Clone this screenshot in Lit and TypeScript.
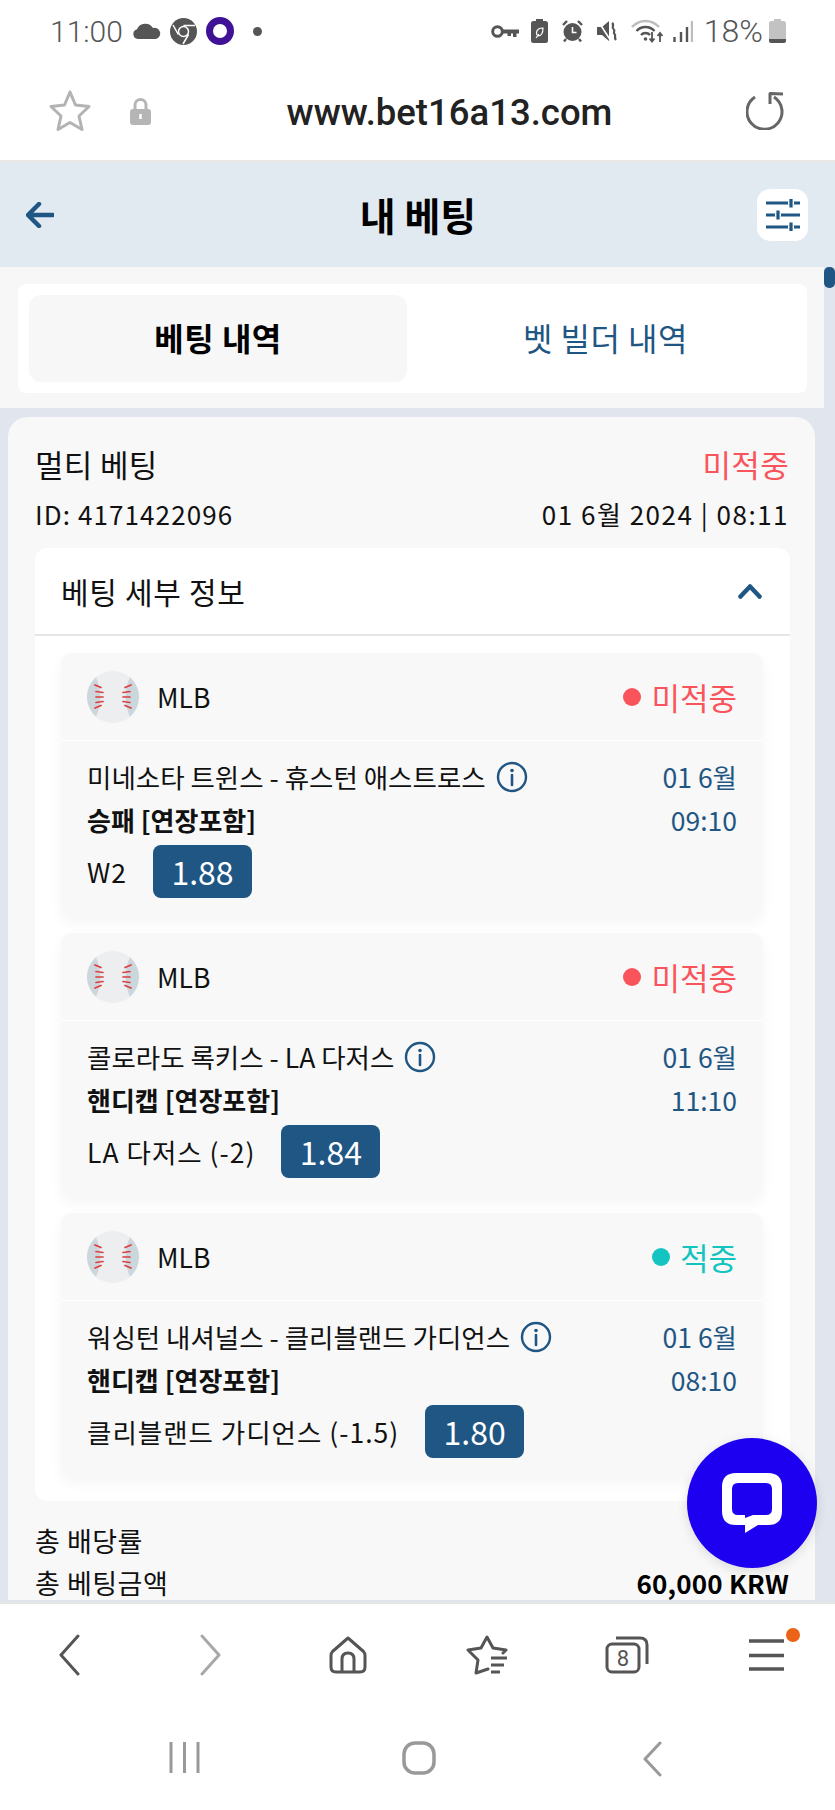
import { LitElement, html, css, svg } from "lit";

const ball = html`<svg class="ball" viewBox="0 0 52 52">
  <circle cx="26" cy="26" r="26" fill="#eceeef" />
  <path d="M9 6.300Q18 26 9 45.700A26 26 0 0 1 9 6.300ZM43 6.300Q34 26 43 45.700A26 26 0 0 0 43 6.300Z" fill="#ccd6dd" />
  <path d="M8 14l6 2.500M9 20.500l7 1M9 26h7M9 31.500l7-1M8 37l6-2.500M44 14l-6 2.500M43 20.500l-7 1M43 26h-7M43 31.500l-7-1M44 37l-6-2.500" stroke="#dd3e3e" stroke-width="1.700" stroke-linecap="round" fill="none" />
</svg>`;

const info = html`<svg class="info" viewBox="0 0 32 32">
  <circle cx="16" cy="16" r="14" fill="none" stroke="#1f5683" stroke-width="2.400" />
  <circle cx="16" cy="9.500" r="1.800" fill="#1f5683" />
  <path d="M16 14v10" stroke="#1f5683" stroke-width="2.600" stroke-linecap="round" />
</svg>`;

interface Bet {
  teams: string;
  market: string;
  pick: string;
  odds: string;
  time: string;
  won: boolean;
}

const bets: Bet[] = [
  { teams: "미네소타 트윈스 - 휴스턴 애스트로스", market: "승패 [연장포함]", pick: "W2", odds: "1.88", time: "09:10", won: false },
  { teams: "콜로라도 록키스 - LA 다저스", market: "핸디캡 [연장포함]", pick: "LA 다저스 (-2)", odds: "1.84", time: "11:10", won: false },
  { teams: "워싱턴 내셔널스 - 클리블랜드 가디언스", market: "핸디캡 [연장포함]", pick: "클리블랜드 가디언스 (-1.5)", odds: "1.80", time: "08:10", won: true },
];

class BetCard extends LitElement {
  static properties = { bet: { attribute: false } };
  declare bet: Bet;

  static styles = css`
    :host {
      display: block;
      background: #f8f8f8;
      border-radius: 10px;
      box-shadow: 0 5px 14px rgba(0, 0, 0, 0.04);
      color: #111;
    }
    .head {
      height: 87px;
      padding: 0 26px;
      display: flex;
      align-items: center;
      border-bottom: 1px solid #fff;
    }
    .ball {
      display: block;
      width: 52px;
      height: 52px;
      margin-right: 18px;
    }
    .league {
      font-size: 26.500px;
      flex: 1;
    }
    .status {
      font-size: 31px;
      color: #f9545b;
      display: flex;
      align-items: center;
      gap: 10px;
    }
    .status.won {
      color: #14c4c0;
    }
    .dot {
      width: 18px;
      height: 18px;
      border-radius: 50%;
      background: currentColor;
    }
    .body {
      padding: 19px 26px 20px;
      display: flex;
      justify-content: space-between;
    }
    .line {
      height: 34px;
      line-height: 34px;
      font-size: 26.500px;
      display: flex;
      align-items: center;
      white-space: nowrap;
    }
    .info {
      display: block;
      width: 32px;
      height: 32px;
      margin-left: 10px;
    }
    .market {
      font-weight: 700;
      font-size: 26px;
      margin-top: 9px;
    }
    .pick {
      height: 53px;
      margin-top: 8px;
      gap: 26px;
      letter-spacing: 1px;
    }
    .odds {
      width: 99px;
      height: 53px;
      line-height: 53px;
      border-radius: 8px;
      background: #1f5683;
      color: #fff;
      font-size: 32px;
      letter-spacing: 0;
      text-align: center;
    }
    .when {
      color: #1f5683;
      text-align: right;
    }
    .when .line {
      justify-content: flex-end;
    }
    .when .line + .line {
      margin-top: 9px;
    }
  `;

  render() {
    const b = this.bet;
    return html`
      <div class="head">
        ${ball}
        <div class="league">MLB</div>
        <div class="status ${b.won ? "won" : ""}"><span class="dot"></span>${b.won ? "적중" : "미적중"}</div>
      </div>
      <div class="body">
        <div>
          <div class="line">${b.teams}${info}</div>
          <div class="line market">${b.market}</div>
          <div class="line pick">${b.pick}<span class="odds">${b.odds}</span></div>
        </div>
        <div class="when">
          <div class="line">01 6월</div>
          <div class="line">${b.time}</div>
        </div>
      </div>
    `;
  }
}
customElements.define("bet-card", BetCard);

class AppRoot extends LitElement {
  static styles = css`
    :host {
      display: block;
      width: 835px;
      height: 1810px;
      overflow: hidden;
      background: #fff;
      font-family: "Noto Sans CJK KR", "Noto Sans", sans-serif;
    }
    .page {
      height: 1810px;
      display: flex;
      flex-direction: column;
    }
    svg {
      display: block;
      flex: none;
    }
    .status-bar {
      height: 62px;
      flex: none;
      padding: 0 49px 0 50px;
      display: flex;
      align-items: center;
      color: #555;
      font-family: Roboto, sans-serif;
      font-weight: 300;
      font-size: 30px;
    }
    .status-bar .clock {
      width: 83px;
    }
    .status-bar .push {
      margin-left: auto;
    }
    .status-bar .level {
      margin-left: 11px;
      font-size: 32px;
    }
    .url-bar {
      height: 98px;
      flex: none;
      padding: 0 49px 0 49px;
      display: flex;
      align-items: center;
      border-bottom: 3px solid #e8e8e8;
      box-sizing: content-box;
    }
    .url {
      flex: 1;
      text-align: center;
      font-family: Roboto, sans-serif;
      font-weight: 500;
      font-size: 36.500px;
      color: #222;
      padding: 2px 0 0 2px;
    }
    .top {
      height: 104px;
      flex: none;
      background: #e1e9f1;
      padding: 0 27px 0 26px;
      display: flex;
      align-items: center;
      justify-content: space-between;
    }
    .title {
      font-size: 39px;
      font-weight: 700;
      color: #000;
      padding: 0 0 2px 25px;
    }
    .filter {
      width: 51px;
      height: 52px;
      border-radius: 13px;
      background: #fff;
      display: flex;
      align-items: center;
      justify-content: center;
    }
    .main {
      flex: 1;
      min-height: 0;
      overflow: hidden;
      position: relative;
      background: #e1e6ee;
    }
    .thumb {
      position: absolute;
      right: 0;
      top: 0;
      width: 11px;
      height: 21px;
      border-radius: 5px;
      background: #1f5683;
    }
    .tabs-wrap {
      width: 824px;
      box-sizing: border-box;
      background: #f7f7f8;
      padding: 17px 17px 15px 18px;
    }
    .tabs {
      height: 109px;
      box-sizing: border-box;
      border-radius: 8px;
      background: #fff;
      padding: 11px;
      display: flex;
      font-size: 32px;
      letter-spacing: 0.500px;
    }
    .tab {
      height: 87px;
      width: 378px;
      box-sizing: border-box;
      padding-bottom: 3px;
      border-radius: 12px;
      display: flex;
      align-items: center;
      justify-content: center;
    }
    .tab.active {
      background: #f7f7f7;
      font-weight: 700;
      color: #000;
    }
    .tab.other {
      flex: 1;
      color: #1f5683;
      padding-left: 8px;
    }
    .card {
      width: 807px;
      margin: 9px 0 0 8px;
      box-sizing: border-box;
      padding: 27px 26px 0 27px;
      background: #f8f8f8;
      border-radius: 20px 20px 0 0;
      color: #111;
    }
    .row {
      display: flex;
      align-items: center;
      justify-content: space-between;
      white-space: nowrap;
    }
    .big {
      height: 40px;
      font-size: 31px;
      letter-spacing: 0.300px;
      transform: translateY(-1px);
    }
    .lost {
      color: #f9545b;
    }
    .meta {
      height: 36px;
      font-size: 26px;
      letter-spacing: 1.100px;
      margin-top: 11px;
    }
    .meta .date {
      letter-spacing: 1.500px;
    }
    .panel {
      margin: 17px -1px 0 0;
      background: #fff;
      border-radius: 12px;
    }
    .panel-head {
      height: 86px;
      padding: 0 28px 0 26px;
      border-bottom: 2px solid #e6e6e6;
      font-size: 30px;
      letter-spacing: 0.700px;
    }
    .bets {
      padding: 17px 27px 23px 26px;
      display: flex;
      flex-direction: column;
      gap: 15px;
    }
    .total {
      height: 36px;
      font-size: 27px;
      letter-spacing: 0.500px;
      margin-top: 21px;
    }
    .total + .total {
      margin-top: 6px;
    }
    .total b {
      font-size: 26px;
      font-weight: 700;
      color: #000;
      letter-spacing: 0.200px;
    }
    .chat {
      position: absolute;
      left: 687px;
      top: 1171px;
      width: 130px;
      height: 130px;
      border-radius: 50%;
      background: #1e00f0;
      box-shadow: 0 3px 12px rgba(0, 0, 0, 0.12);
      display: flex;
      align-items: center;
      justify-content: center;
    }
    .nav {
      height: 126px;
      flex: none;
      background: #fff;
      border-top: 2px solid #e6e6e6;
      display: grid;
      grid-template-columns: repeat(6, 139.600px);
      justify-content: center;
      justify-items: center;
      align-items: center;
      padding-bottom: 22px;
      box-sizing: border-box;
    }
    .nav .forward {
      margin-left: 6px;
    }
    .menu {
      position: relative;
    }
    .badge {
      position: absolute;
      right: -16px;
      top: -11px;
      width: 14px;
      height: 14px;
      border-radius: 50%;
      background: #ea6317;
    }
    .sys {
      height: 82px;
      flex: none;
      display: flex;
      align-items: flex-start;
      background: #fff;
      padding: 13px 173px 0 169px;
      box-sizing: border-box;
      justify-content: space-between;
    }
    .sys .home {
      margin-right: 4px;
    }
  `;

  statusLeft() {
    return html`
      <span class="clock">11:00</span>
      <svg width="28" height="16" viewBox="0 0 28 16"><path d="M5 16a5 5 0 0 1-1-9.800A9 9 0 0 1 20 5a5.600 5.600 0 0 1 3 11Z" fill="#555" /></svg>
      <svg style="margin-left:9px" width="27" height="27" viewBox="0 0 27 27">
        <circle cx="13.500" cy="13.500" r="13.500" fill="#555" />
        <circle cx="13.500" cy="13.500" r="5" fill="#555" stroke="#fff" stroke-width="1.500" />
        <path d="M13.500 7.500H25M8.300 16.500L3 7M18.500 16.500L13 26" stroke="#fff" stroke-width="1.500" fill="none" />
      </svg>
      <svg style="margin-left:9px" width="28" height="28" viewBox="0 0 28 28">
        <circle cx="14" cy="14" r="10.500" fill="none" stroke="#3f1296" stroke-width="7" />
      </svg>
      <svg style="margin-left:19px" width="9" height="9" viewBox="0 0 9 9"><circle cx="4.500" cy="4.500" r="4.500" fill="#555" /></svg>
    `;
  }

  statusRight() {
    return html`
      <svg class="push" width="28" height="13" viewBox="0 0 28 13">
        <circle cx="6.500" cy="6.500" r="4.800" fill="none" stroke="#555" stroke-width="3" />
        <path d="M10 4.500h18v4h-2.500V12h-3.500V8.500h-2V11h-3.500V8.500H10Z" fill="#555" />
      </svg>
      <svg style="margin-left:12px" width="17" height="24" viewBox="0 0 17 24">
        <path d="M5 0h7v2h2.500A2.500 2.500 0 0 1 17 4.500V21.500A2.500 2.500 0 0 1 14.500 24H2.500A2.500 2.500 0 0 1 0 21.500V4.500A2.500 2.500 0 0 1 2.500 2H5Z" fill="#555" />
        <path d="M12 9c-4 0-6.500 1.500-6.500 5 0 1.500.5 2.500 1.500 3 3 0 5-2 5-8ZM5 19l3-4" stroke="#fff" stroke-width="1.200" fill="none" />
      </svg>
      <svg style="margin-left:14px" width="21" height="22" viewBox="0 0 21 22">
        <circle cx="10.500" cy="12" r="9" fill="#555" />
        <path d="M10.500 7v5.500h4" stroke="#fff" stroke-width="1.600" fill="none" />
        <path d="M1 5l4-4M20 5l-4-4M4 19l-2 2.500M17 19l2 2.500" stroke="#555" stroke-width="2.400" />
      </svg>
      <svg style="margin-left:14px" width="22" height="22" viewBox="0 0 22 22">
        <path d="M0 7h5l7-6v20l-7-6H0Z" fill="#555" />
        <path d="M1 1l13 20" stroke="#fff" stroke-width="1.600" />
        <path d="M15 3c3 2-1 4 1.500 6s-1 3 1 5-1 3 1.500 6" stroke="#555" stroke-width="2.200" fill="none" />
      </svg>
      <svg style="margin-left:12px" width="33" height="24" viewBox="0 0 33 24">
        <path d="M1 8a18 18 0 0 1 27 0" stroke="#bdbdbd" stroke-width="2.500" fill="none" />
        <path d="M5.500 12a12 12 0 0 1 18 0M10 16a6 6 0 0 1 9 0" stroke="#555" stroke-width="2.500" fill="none" />
        <circle cx="14.500" cy="20" r="1.800" fill="#555" />
        <path d="M21 13v9M18.500 19.500l2.500 3 2.500-3M29 23v-9M26.500 17l2.500-3 2.500 3" stroke="#555" stroke-width="1.800" fill="none" />
      </svg>
      <svg style="margin-left:9px" width="20" height="21" viewBox="0 0 20 21">
        <path d="M1.500 16v5M8 11v10M14 6v15" stroke="#555" stroke-width="2.400" />
        <path d="M19 0v21" stroke="#bdbdbd" stroke-width="2.400" />
      </svg>
      <span class="level">18%</span>
      <svg style="margin-left:6px" width="17" height="24" viewBox="0 0 17 24">
        <path d="M5 0h7v2h2.500A2.500 2.500 0 0 1 17 4.500V21.500A2.500 2.500 0 0 1 14.500 24H2.500A2.500 2.500 0 0 1 0 21.500V4.500A2.500 2.500 0 0 1 2.500 2H5Z" fill="#c2c2c2" />
        <path d="M0 20h17v1.500A2.500 2.500 0 0 1 14.500 24H2.500A2.500 2.500 0 0 1 0 21.500Z" fill="#555" />
      </svg>
    `;
  }

  filterIcon() {
    const bar = (y: number, k: number) => svg`
      <path d="M0 ${y}H34" stroke="#1f5683" stroke-width="3.200" />
      <path d="M${k - 3} ${y}h6" stroke="#fff" stroke-width="3.400" />
      <path d="M${k} ${y - 4.500}V${y + 4.500}" stroke="#1f5683" stroke-width="3.200" />`;
    return html`<svg width="34" height="32" viewBox="0 0 34 32">${bar(4, 25)}${bar(16, 12)}${bar(28, 25)}</svg>`;
  }

  navBar() {
    return html`
      <nav class="nav">
        <svg width="22" height="42" viewBox="0 0 22 42"><path d="M20 2 3 21l17 19" stroke="#555" stroke-width="3" fill="none" stroke-linecap="round" stroke-linejoin="round" /></svg>
        <svg class="forward" width="22" height="42" viewBox="0 0 22 42"><path d="M2 2l17 19L2 40" stroke="#a8a8a8" stroke-width="3" fill="none" stroke-linecap="round" stroke-linejoin="round" /></svg>
        <svg width="38" height="38" viewBox="0 0 38 38">
          <path d="M19 2 3.500 15.500Q2 17 2 19.500V31q0 5 5 5h24q5 0 5-5V19.500q0-2.500-1.500-4Z" stroke="#555" stroke-width="3" fill="none" stroke-linejoin="round" />
          <path d="M13 36V23q0-6 6-6t6 6v13" stroke="#555" stroke-width="3" fill="none" />
        </svg>
        <svg width="42" height="40" viewBox="0 0 42 40">
          <path d="M22 34 10 38l2-13-10-10 13-2L21 2l6 11 13 2-3 3" stroke="#555" stroke-width="3" fill="none" stroke-linejoin="round" stroke-linecap="round" />
          <path d="M25 23h16M25 30h13M25 37h9" stroke="#555" stroke-width="3" />
        </svg>
        <svg width="44" height="38" viewBox="0 0 44 38">
          <rect x="2" y="8" width="32" height="28" rx="5" fill="none" stroke="#555" stroke-width="3" />
          <path d="M11 2h24q7 0 7 7v19" stroke="#555" stroke-width="3" fill="none" />
          <text x="18" y="30" text-anchor="middle" font-family="Roboto, sans-serif" font-size="22" fill="#555">8</text>
        </svg>
        <div class="menu">
          <svg width="35" height="32" viewBox="0 0 35 32"><path d="M0 2h35M0 16.500h35M0 30h35" stroke="#555" stroke-width="3.500" /></svg>
          <span class="badge"></span>
        </div>
      </nav>
    `;
  }

  render() {
    return html`
      <div class="page">
        <div class="status-bar">${this.statusLeft()}${this.statusRight()}</div>
        <div class="url-bar">
          <svg width="42" height="42" viewBox="0 0 42 42"><path d="M21 2l5.500 13L40 16.500 30 26l3 13.500-12-7-12 7L12 26 2 16.500 15.500 15Z" fill="none" stroke="#b3b3b3" stroke-width="3" stroke-linejoin="round" /></svg>
          <svg style="margin-left:39px" width="21" height="27" viewBox="0 0 21 27">
            <path d="M5 12V7a5.500 5.500 0 0 1 11 0v5" fill="none" stroke="#b5b5b5" stroke-width="3" />
            <path d="M3 11h15a3 3 0 0 1 3 3v10a3 3 0 0 1-3 3H3a3 3 0 0 1-3-3V14a3 3 0 0 1 3-3Z" fill="#b5b5b5" />
            <path d="M10.500 16v5" stroke="#fff" stroke-width="2.500" />
          </svg>
          <div class="url">www.bet16a13.com</div>
          <svg width="40" height="38" viewBox="0 0 40 38">
            <path d="M9 5A17.500 17.500 0 1 0 28 5M24 12V1.500L37 2" fill="none" stroke="#666" stroke-width="3" stroke-linejoin="round" />
          </svg>
        </div>
        <header class="top">
          <svg width="28" height="26" viewBox="0 0 28 26"><path d="M13 2 2 13l11 11M3 13h24" fill="none" stroke="#1f5683" stroke-width="4.500" stroke-linecap="round" stroke-linejoin="round" /></svg>
          <div class="title">내 베팅</div>
          <div class="filter">${this.filterIcon()}</div>
        </header>
        <main class="main">
          <div class="thumb"></div>
          <div class="tabs-wrap">
            <div class="tabs">
              <div class="tab active">베팅 내역</div>
              <div class="tab other">벳 빌더 내역</div>
            </div>
          </div>
          <section class="card">
            <div class="row big"><span>멀티 베팅</span><span class="lost">미적중</span></div>
            <div class="row meta"><span>ID: 4171422096</span><span class="date">01 6월 2024 | 08:11</span></div>
            <div class="panel">
              <div class="row panel-head">
                <span>베팅 세부 정보</span>
                <svg width="24" height="16" viewBox="0 0 24 16"><path d="M2.500 13.500 12 3.500l9.500 10" fill="none" stroke="#1f5683" stroke-width="4.500" stroke-linecap="round" stroke-linejoin="round" /></svg>
              </div>
              <div class="bets">${bets.map((b) => html`<bet-card .bet=${b}></bet-card>`)}</div>
            </div>
            <div class="row total"><span>총 배당률</span></div>
            <div class="row total"><span>총 베팅금액</span><b>60,000 KRW</b></div>
          </section>
          <div class="chat">
            <svg width="60" height="60" viewBox="0 0 60 60">
              <path fill-rule="evenodd" fill="#fff" d="M14 0h32q14 0 14 14v24q0 14-14 14H36L23 60V52h-9Q0 52 0 38V14Q0 0 14 0ZM16 10q-6 0-6 6v20q0 6 6 6h7v3l8-3h13q6 0 6-6V16q0-6-6-6Z" />
            </svg>
          </div>
        </main>
        ${this.navBar()}
        <div class="sys">
          <svg width="31" height="33" viewBox="0 0 31 33"><path d="M2 1v31M15.500 1v31M29 1v31" stroke="#999" stroke-width="3" /></svg>
          <svg class="home" width="34" height="34" viewBox="0 0 34 34"><rect x="2" y="2" width="30" height="30" rx="11" fill="none" stroke="#999" stroke-width="3.500" /></svg>
          <svg width="20" height="36" viewBox="0 0 20 36"><path d="M18 2 3 18l15 16" fill="none" stroke="#999" stroke-width="3" stroke-linecap="round" stroke-linejoin="round" /></svg>
        </div>
      </div>
    `;
  }
}
customElements.define("app-root", AppRoot);
